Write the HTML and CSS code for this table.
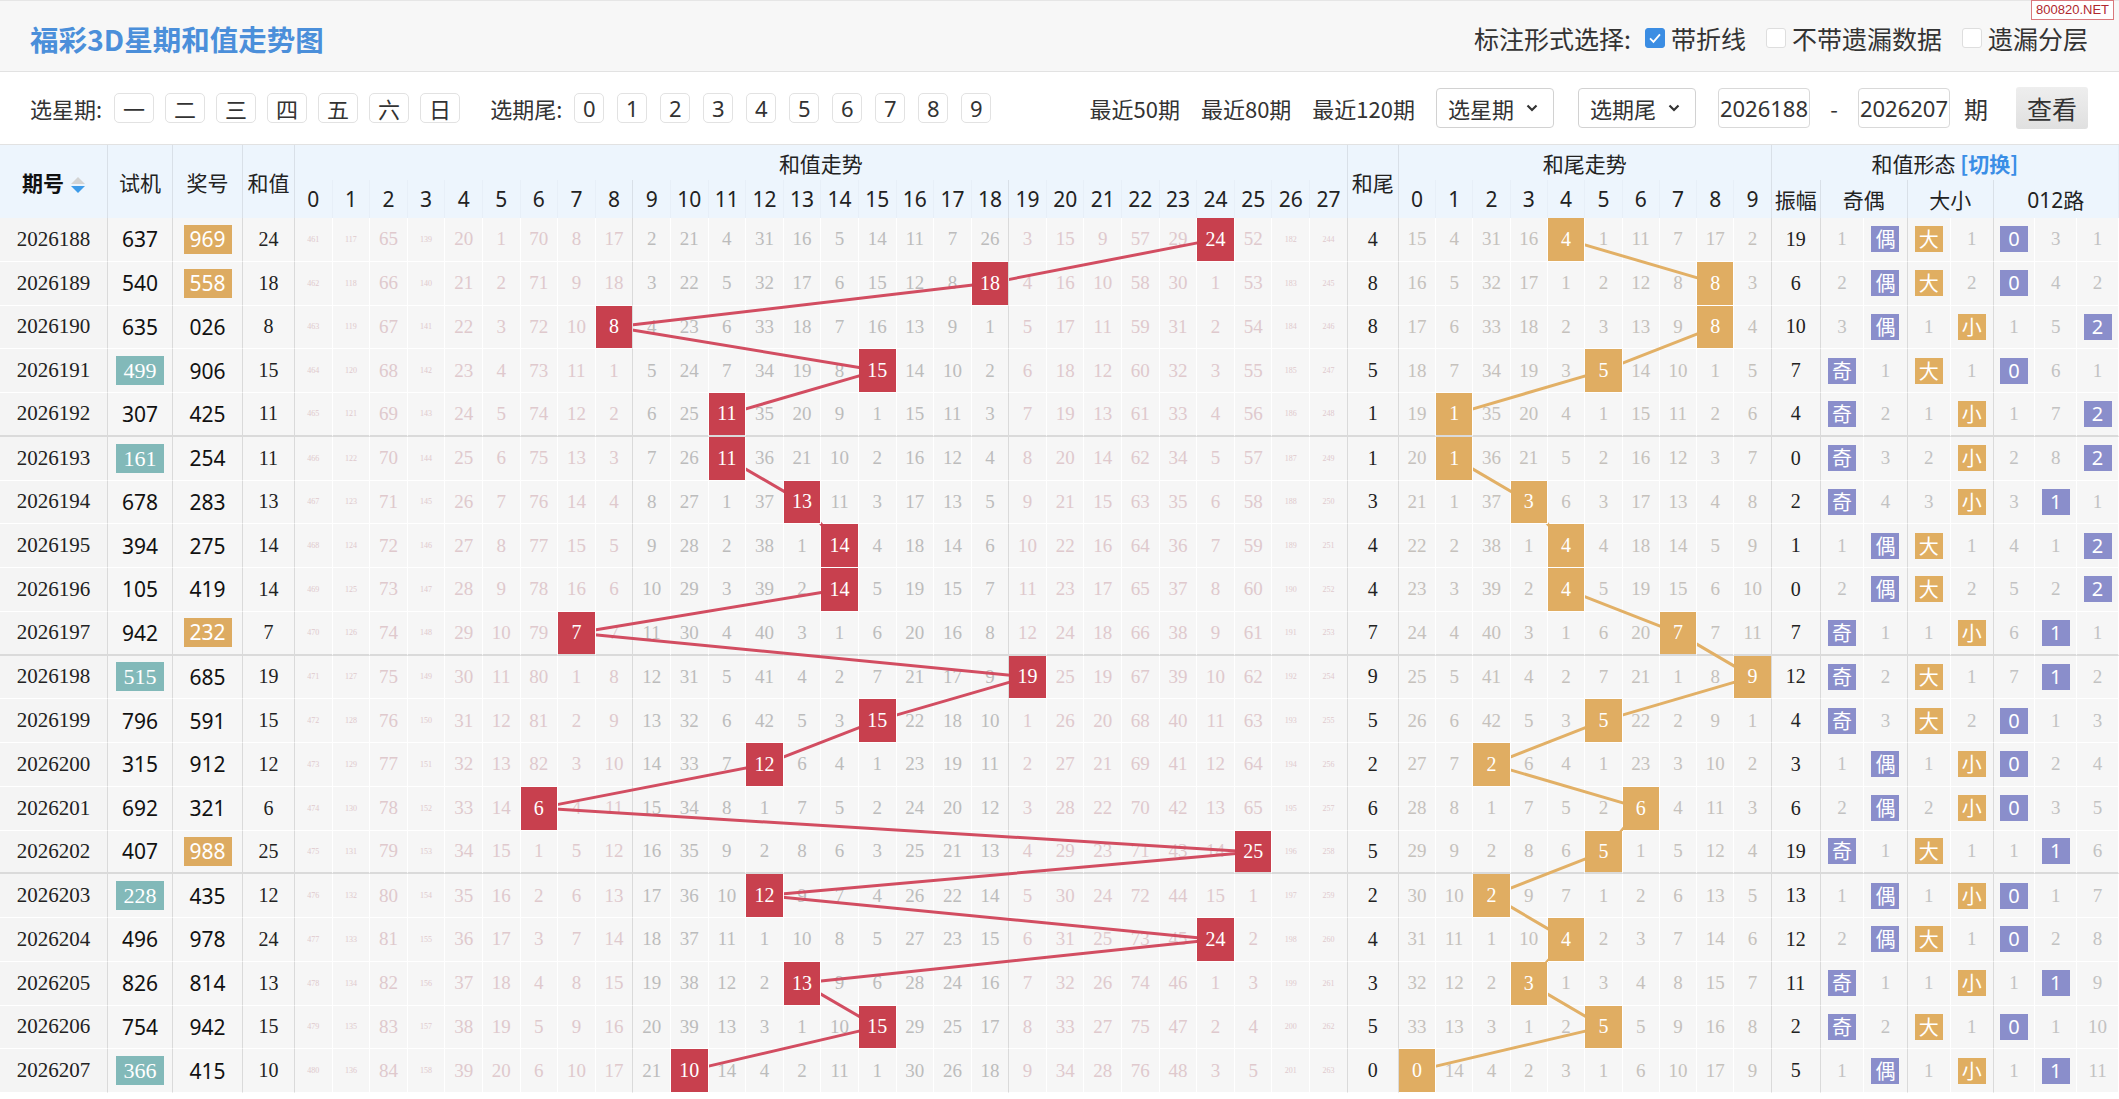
FILE: index.html
```html
<!DOCTYPE html>
<html lang="zh-CN">
<head>
<meta charset="utf-8">
<title>福彩3D星期和值走势图</title>
<link rel="stylesheet" href="styles.css">
</head>
<body>
<div class="page">
  <div class="site-tag">800820.NET</div>
  <header class="titlebar">
    <h1 class="title">福彩3D星期和值走势图</h1>
    <div class="marks">
      <span class="marks-label">标注形式选择:</span>
      <label class="chk"><span class="box box-on"><svg viewBox="0 0 20 20"><path d="M4.5 10.5l3.8 3.8L15.5 6"/></svg></span>带折线</label>
      <label class="chk"><span class="box"></span>不带遗漏数据</label>
      <label class="chk"><span class="box"></span>遗漏分层</label>
    </div>
  </header>
  <div class="filters">
    <span class="flabel">选星期:</span>
    <div class="fbtns fbtns-wk">
      <span class="fbtn">一</span><span class="fbtn">二</span><span class="fbtn">三</span><span class="fbtn">四</span><span class="fbtn">五</span><span class="fbtn">六</span><span class="fbtn">日</span>
    </div>
    <span class="flabel flabel-tail">选期尾:</span>
    <div class="fbtns fbtns-dg">
      <span class="fbtn">0</span><span class="fbtn">1</span><span class="fbtn">2</span><span class="fbtn">3</span><span class="fbtn">4</span><span class="fbtn">5</span><span class="fbtn">6</span><span class="fbtn">7</span><span class="fbtn">8</span><span class="fbtn">9</span>
    </div>
    <div class="recent">
      <span>最近50期</span><span>最近80期</span><span>最近120期</span>
    </div>
    <div class="sel">选星期<svg class="chev" viewBox="0 0 14 10"><path d="M2.5 2.5l4.5 4.5 4.5-4.5"/></svg></div>
    <div class="sel sel-2">选期尾<svg class="chev" viewBox="0 0 14 10"><path d="M2.5 2.5l4.5 4.5 4.5-4.5"/></svg></div>
    <span class="inp">2026188</span>
    <span class="dash">-</span>
    <span class="inp inp-2">2026207</span>
    <span class="qi">期</span>
    <span class="view-btn">查看</span>
  </div>
  <div class="chart" id="chart">
    <table class="trend" id="trend">
      <colgroup id="cols"></colgroup>
      <thead id="thead"></thead>
      <tbody id="tbody"></tbody>
    </table>
    <svg class="lines" id="lines"></svg>
  </div>
</div>
<script src="script.js"></script>
</body>
</html>
```

FILE: styles.css
```css
* { box-sizing: border-box; }
body {
  margin: 0;
  background: #fff;
  color: #333;
  font-family: "Noto Sans CJK SC", "Noto Sans", sans-serif;
}
.page { position: relative; width: 2119px; }

.site-tag {
  position: absolute;
  top: 0;
  right: 5px;
  height: 20px;
  padding: 0 4px;
  border: 1px solid #d9787c;
  background: #fff;
  color: #b0282e;
  font: 13px/18px "Liberation Sans", sans-serif;
  z-index: 5;
}

.titlebar {
  display: flex;
  align-items: center;
  justify-content: space-between;
  height: 72px;
  padding: 4px 31px 0 30px;
  background: #f7f7f7;
  border-top: 1px solid #e6e6e6;
  border-bottom: 1px solid #e2e2e2;
}
.title {
  margin: 0;
  font-size: 28.5px;
  font-weight: bold;
  color: #4b8fda;
}
.marks { display: flex; align-items: center; font-size: 25px; color: #333; }
.marks-label { margin-right: 14px; }
.chk { display: flex; align-items: center; margin-left: 20px; }
.marks-label + .chk { margin-left: 0; }
.box {
  width: 20px;
  height: 20px;
  border: 1px solid #dedede;
  border-radius: 3px;
  background: #fff;
  margin-right: 6px;
}
.box-on { background: #3b8de3; border-color: #3b8de3; }
.box svg { display: block; width: 18px; height: 18px; fill: none; stroke: #fff; stroke-width: 2; }

.filters {
  display: flex;
  align-items: center;
  height: 73px;
  padding: 0 31px 0 30px;
  border-bottom: 1px solid #e2e2e2;
  font-size: 22px;
  color: #333;
}
.fbtns { display: flex; }
.fbtn {
  display: flex;
  align-items: center;
  justify-content: center;
  height: 30px;
  border: 1px solid #e2e2e2;
  border-radius: 5px;
  background: #fff;
  font-size: 22px;
}
.fbtns-wk { margin-left: 12px; gap: 11px; }
.fbtns-wk .fbtn { width: 40px; }
.flabel-tail { margin-left: 30px; }
.fbtns-dg { margin-left: 12px; gap: 13px; }
.fbtns-dg .fbtn { width: 30px; font-family: "Noto Sans", sans-serif; }
.recent { margin-left: auto; display: flex; gap: 21px; }
.sel {
  display: flex;
  align-items: center;
  justify-content: space-between;
  width: 118px;
  height: 40px;
  margin-left: 21px;
  padding: 0 14px 0 11px;
  border: 1px solid #d2d2d2;
  border-radius: 4px;
  background: #fff;
}
.sel-2 { margin-left: 24px; }
.chev { width: 14px; height: 10px; fill: none; stroke: #333; stroke-width: 2.2; }
.inp {
  display: flex;
  align-items: center;
  justify-content: center;
  width: 92px;
  height: 40px;
  margin-left: 22px;
  border: 1px solid #d9d9d9;
  border-radius: 4px;
  background: #fff;
  font-family: "Noto Sans", sans-serif;
  font-size: 22px;
}
.inp-2 { margin-left: 0; }
.dash { width: 48px; text-align: center; }
.qi { margin-left: 14px; font-size: 24px; }
.view-btn {
  display: flex;
  align-items: center;
  justify-content: center;
  width: 72px;
  height: 42px;
  margin-left: 28px;
  border-radius: 3px;
  background: linear-gradient(#eeeeee, #e0e0e0);
  font-size: 25px;
  color: #333;
}

.chart { position: relative; }
.trend {
  border-collapse: separate;
  border-spacing: 0;
  table-layout: fixed;
  width: 2119px;
}
.c-per { width: 108px; }
.c-sj { width: 65px; }
.c-jh { width: 70px; }
.c-hz { width: 52px; }
.c-s { width: 37.6px; }
.c-hw { width: 51px; }
.c-t { width: 37.3px; }
.c-zf { width: 49px; }
.c-jo { width: 43.5px; }
.c-dx { width: 43px; }
.c-lu { width: 41.7px; }

.trend th {
  padding: 0;
  background: #edf5fd;
  font-weight: normal;
  font-size: 21px;
  color: #222;
  border-right: 1px solid #e7eff8;
  white-space: nowrap;
  overflow: hidden;
}
.trend .h1 { height: 35px; }
.trend .h2 { height: 38px; }
.trend .h2 th { font-family: "Noto Sans", "Noto Sans CJK SC", sans-serif; }
.trend .h2 th.cj { font-family: "Noto Sans CJK SC", sans-serif; }
.trend th.sr { border-right-color: #d9e0e8; }
.per-t { font-weight: bold; color: #111; }
.sort {
  display: inline-flex;
  flex-direction: column;
  gap: 2px;
  margin-left: 7px;
  vertical-align: middle;
}
.sort::before, .sort::after {
  content: "";
  width: 0;
  height: 0;
  border-left: 7px solid transparent;
  border-right: 7px solid transparent;
}
.sort::before { border-bottom: 7px solid #d3d3d3; }
.sort::after { border-top: 7px solid #3d9be9; }
.switch { color: #3a8ee6; font-weight: bold; }

.trend tbody tr { height: 43.75px; }
.trend td {
  padding: 0;
  text-align: center;
  background: #f6f6f6;
  border-right: 1px solid #fff;
  border-bottom: 1px solid #fff;
  font-family: "Liberation Serif", serif;
  font-size: 19px;
  white-space: nowrap;
  overflow: hidden;
}
.trend td.sr { border-right-color: #dadada; }
.trend tr.gend td { border-bottom: 2px solid #dadada; }

.trend td.per { font-size: 21px; color: #222; background: #f4f4f4; }
.trend td.sj, .trend td.jh { font-family: "Noto Sans", sans-serif; font-size: 21px; color: #111; }
.pair {
  display: inline-block;
  width: 48px;
  height: 29px;
  line-height: 29px;
  color: #fff;
}
.pair-t { background: #82b9b9; font-family: "Liberation Serif", serif; font-size: 22px; }
.pair-o { background: #ddab61; }
.trend td.hz, .trend td.hw, .trend td.zf { font-size: 20px; color: #222; }
.trend td.z1, .trend td.z3 { color: #dfc9cd; }
.trend td.z2 { color: #bcbcbc; }
.trend td.tiny { font-size: 8px; }
.trend td.t { color: #c5c1bc; }
.trend td.sh { color: #c2c2c2; }
.trend td.hit { position: relative; z-index: 2; color: #fff; font-size: 20px; }
.trend td.hit-r { background: #c8404e; }
.trend td.hit-o { background: #e0ad62; }
.bdg {
  display: inline-block;
  width: 28px;
  height: 26px;
  line-height: 26px;
  color: #fff;
  font-family: "Noto Sans CJK SC", "Noto Sans", sans-serif;
  font-size: 20px;
  vertical-align: middle;
}
.bdg-p { background: #8a8ecb; }
.bdg-o { background: #e0ae61; }
.bdg-n { font-family: "Noto Sans", sans-serif; }

.lines {
  position: absolute;
  left: 0;
  top: 0;
  width: 100%;
  height: 100%;
  pointer-events: none;
  z-index: 1;
}
.ln { fill: none; stroke-width: 3; stroke-linejoin: round; }
.ln-r { stroke: #d24d61; }
.ln-o { stroke: #e2b066; }
```

FILE: script.js
```js
(function () {
  var data = [
    ["2026188", "637", "969"], ["2026189", "540", "558"], ["2026190", "635", "026"],
    ["2026191", "499", "906"], ["2026192", "307", "425"], ["2026193", "161", "254"],
    ["2026194", "678", "283"], ["2026195", "394", "275"], ["2026196", "105", "419"],
    ["2026197", "942", "232"], ["2026198", "515", "685"], ["2026199", "796", "591"],
    ["2026200", "315", "912"], ["2026201", "692", "321"], ["2026202", "407", "988"],
    ["2026203", "228", "435"], ["2026204", "496", "978"], ["2026205", "826", "814"],
    ["2026206", "754", "942"], ["2026207", "366", "415"]
  ];
  var m = [461, 117, 65, 139, 20, 1, 70, 8, 17, 2, 21, 4, 31, 16, 5, 14, 11, 7, 26, 3, 15, 9, 57, 29, 0, 52, 182, 244];
  var t = [15, 4, 31, 16, 0, 1, 11, 7, 17, 2];
  var oe = [1, 0], bs = [0, 1], lu = [0, 3, 1];
  var prev = 5;

  function isPair(s) { return s[0] === s[1] || s[1] === s[2] || s[0] === s[2]; }

  var cg = document.getElementById('cols');
  function addCol(cls, n) {
    for (var i = 0; i < n; i++) { var c = document.createElement('col'); c.className = cls; cg.appendChild(c); }
  }
  addCol('c-per', 1); addCol('c-sj', 1); addCol('c-jh', 1); addCol('c-hz', 1); addCol('c-s', 28);
  addCol('c-hw', 1); addCol('c-t', 10); addCol('c-zf', 1); addCol('c-jo', 2); addCol('c-dx', 2); addCol('c-lu', 3);

  var h = '<tr class="h1"><th rowspan="2" class="sr"><span class="per-t">期号</span><span class="sort"></span></th>' +
    '<th rowspan="2" class="sr">试机</th><th rowspan="2" class="sr">奖号</th><th rowspan="2" class="sr">和值</th>' +
    '<th colspan="28" class="sr">和值走势</th><th rowspan="2" class="sr">和尾</th>' +
    '<th colspan="10" class="sr">和尾走势</th><th colspan="8">和值形态 <span class="switch">[切换]</span></th></tr><tr class="h2">';
  var i;
  for (i = 0; i < 28; i++) h += '<th' + (i === 8 || i === 18 || i === 27 ? ' class="sr"' : '') + '>' + i + '</th>';
  for (i = 0; i < 10; i++) h += '<th' + (i === 9 ? ' class="sr"' : '') + '>' + i + '</th>';
  h += '<th class="sr cj">振幅</th><th colspan="2" class="sr cj">奇偶</th><th colspan="2" class="sr cj">大小</th><th colspan="3">012路</th></tr>';
  document.getElementById('thead').innerHTML = h;

  var body = '';
  data.forEach(function (r, idx) {
    var s = (+r[2][0]) + (+r[2][1]) + (+r[2][2]);
    var tail = s % 10, odd = s % 2 === 1, big = s >= 14, l3 = s % 3, c;
    if (idx > 0) {
      for (c = 0; c < 28; c++) m[c] = (c === s) ? 0 : m[c] + 1;
      for (c = 0; c < 10; c++) t[c] = (c === tail) ? 0 : t[c] + 1;
      oe[0] = odd ? 0 : oe[0] + 1; oe[1] = odd ? oe[1] + 1 : 0;
      bs[0] = big ? 0 : bs[0] + 1; bs[1] = big ? bs[1] + 1 : 0;
      for (c = 0; c < 3; c++) lu[c] = (c === l3) ? 0 : lu[c] + 1;
    }
    var row = '<tr' + (idx % 5 === 4 && idx < 19 ? ' class="gend"' : '') + '>';
    row += '<td class="per sr">' + r[0] + '</td>';
    row += '<td class="sj sr">' + (isPair(r[1]) ? '<span class="pair pair-t">' + r[1] + '</span>' : r[1]) + '</td>';
    row += '<td class="jh sr">' + (isPair(r[2]) ? '<span class="pair pair-o">' + r[2] + '</span>' : r[2]) + '</td>';
    row += '<td class="hz sr">' + s + '</td>';
    for (c = 0; c < 28; c++) {
      var sr = (c === 8 || c === 18 || c === 27) ? ' sr' : '';
      if (c === s) row += '<td class="hit hit-r' + sr + '">' + s + '</td>';
      else {
        var z = c <= 8 ? 'z1' : (c <= 18 ? 'z2' : 'z3');
        row += '<td class="m ' + z + (m[c] >= 100 ? ' tiny' : '') + sr + '">' + m[c] + '</td>';
      }
    }
    row += '<td class="hw sr">' + tail + '</td>';
    for (c = 0; c < 10; c++) {
      var sr2 = c === 9 ? ' sr' : '';
      if (c === tail) row += '<td class="hit hit-o' + sr2 + '">' + tail + '</td>';
      else row += '<td class="t' + sr2 + '">' + t[c] + '</td>';
    }
    row += '<td class="zf sr">' + Math.abs(s - prev) + '</td>';
    if (odd) row += '<td><span class="bdg bdg-p">奇</span></td><td class="sh sr">' + oe[1] + '</td>';
    else row += '<td class="sh">' + oe[0] + '</td><td class="sr"><span class="bdg bdg-p">偶</span></td>';
    if (big) row += '<td><span class="bdg bdg-o">大</span></td><td class="sh sr">' + bs[1] + '</td>';
    else row += '<td class="sh">' + bs[0] + '</td><td class="sr"><span class="bdg bdg-o">小</span></td>';
    for (c = 0; c < 3; c++) {
      if (c === l3) row += '<td><span class="bdg bdg-p bdg-n">' + c + '</span></td>';
      else row += '<td class="sh">' + lu[c] + '</td>';
    }
    row += '</tr>';
    body += row;
    prev = s;
  });
  document.getElementById('tbody').innerHTML = body;

  function draw() {
    var svg = document.getElementById('lines');
    while (svg.firstChild) svg.removeChild(svg.firstChild);
    var wr = document.getElementById('chart').getBoundingClientRect();
    svg.setAttribute('viewBox', '0 0 ' + wr.width + ' ' + wr.height);
    ['hit-r', 'hit-o'].forEach(function (k) {
      var pts = [].map.call(document.querySelectorAll('.' + k), function (el) {
        var b = el.getBoundingClientRect();
        return (b.left - wr.left + (b.width - 1) / 2).toFixed(1) + ',' + (b.top - wr.top + (b.height - 1) / 2).toFixed(1);
      });
      var pl = document.createElementNS('http://www.w3.org/2000/svg', 'polyline');
      pl.setAttribute('points', pts.join(' '));
      pl.setAttribute('class', 'ln ' + (k === 'hit-r' ? 'ln-r' : 'ln-o'));
      svg.appendChild(pl);
    });
  }
  draw();
  window.addEventListener('load', draw);
})();
```
